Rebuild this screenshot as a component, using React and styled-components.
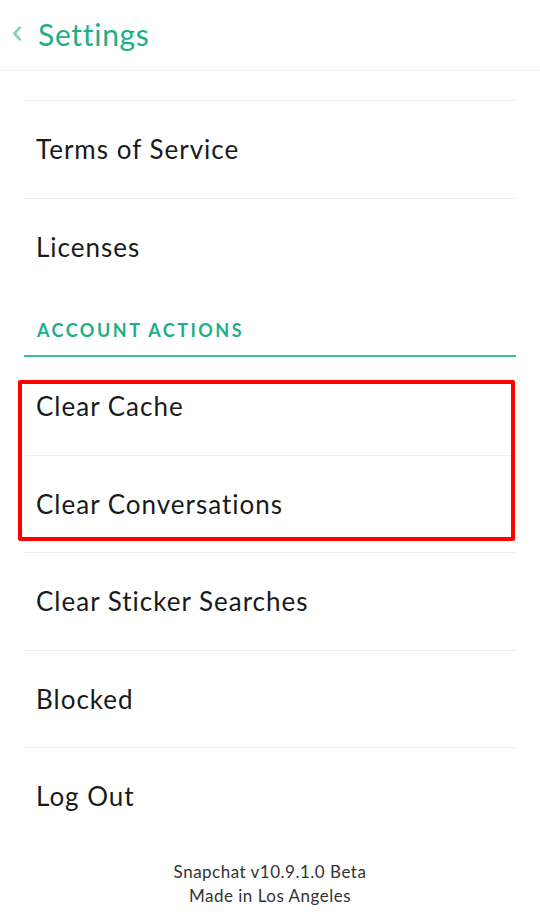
import React from "react";
import styled, { createGlobalStyle } from "styled-components";

const GlobalStyle = createGlobalStyle`
  html, body {
    margin: 0;
    padding: 0;
    background: #ffffff;
  }
  body {
    font-family: "Lato", "Noto Sans", sans-serif;
    -webkit-font-smoothing: antialiased;
  }
`;

const App = () => {
  return (
    <>
      <GlobalStyle />
      <Screen>
        <Header>
          <BackIcon viewBox="0 0 9 14" aria-hidden="true">
            <path d="M7 1.5 L2.2 7 L7 12.5" />
          </BackIcon>
          <Title>Settings</Title>
        </Header>
        <List>
          <Row>Terms of Service</Row>
          <Row>Licenses</Row>
          <SectionTitle>Account Actions</SectionTitle>
          <Highlighted>
            <Row $first>Clear Cache</Row>
            <Row>Clear Conversations</Row>
            <Marker />
          </Highlighted>
          <Row>Clear Sticker Searches</Row>
          <Row>Blocked</Row>
          <Row>Log Out</Row>
        </List>
        <Footer>
          <div>Snapchat v10.9.1.0 Beta</div>
          <div>Made in Los Angeles</div>
        </Footer>
      </Screen>
    </>
  );
};

export default App;

const Screen = styled.div`
  width: 540px;
  min-height: 923px;
  background: #fff;
  overflow: hidden;
`;

const Header = styled.div`
  height: 71px;
  display: flex;
  align-items: center;
  gap: 16px;
  padding-left: 12px;
  border-bottom: 1px solid #f1f1f1;
  box-sizing: border-box;
`;

const BackIcon = styled.svg`
  width: 10px;
  height: 15px;
  fill: none;
  stroke: #86d2ba;
  stroke-width: 2.6;
  stroke-linecap: round;
  stroke-linejoin: round;
  margin-top: -3px;
`;

const Title = styled.h1`
  margin: 0;
  font-size: 30px;
  font-weight: 400;
  color: #1eae88;
  letter-spacing: 0.7px;
  line-height: 1;
  margin-top: -2px;
`;

const List = styled.div`
  margin: 0 24px;
  padding-top: 29px;
`;

const Row = styled.div`
  height: 97.5px;
  display: flex;
  align-items: center;
  padding-left: 12px;
  border-top: ${({ $first }) => ($first ? "none" : "1px solid #f0f0f0")};
  font-size: 26px;
  letter-spacing: 1px;
  color: #1a1a1a;
  box-sizing: border-box;
`;

const SectionTitle = styled.div`
  height: 62px;
  box-sizing: border-box;
  padding: 25px 0 0 13px;
  font-size: 18px;
  line-height: 20px;
  font-weight: 700;
  letter-spacing: 2.5px;
  text-transform: uppercase;
  color: #1eae88;
  border-bottom: 2px solid #3cc09c;
`;

const Highlighted = styled.div`
  position: relative;
`;

const Marker = styled.div`
  position: absolute;
  left: -6px;
  right: 1px;
  top: 23px;
  bottom: 11px;
  border: 4px solid #ff0000;
  border-radius: 2px;
  pointer-events: none;
`;

const Footer = styled.div`
  margin-top: 15px;
  text-align: center;
  font-size: 17px;
  line-height: 24px;
  letter-spacing: 0.5px;
  color: #333;
`;
